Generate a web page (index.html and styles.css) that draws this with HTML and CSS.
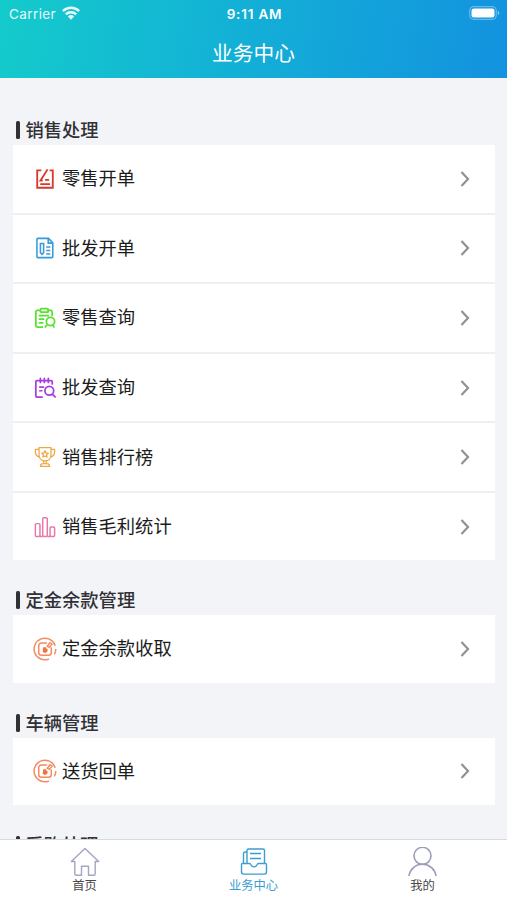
FILE: index.html
```html
<!DOCTYPE html>
<html lang="zh-CN">
<head>
    <meta charset="UTF-8">
    <meta name="viewport" content="width=device-width, initial-scale=1.0">
    <title>业务中心</title>
    <link rel="stylesheet" href="styles.css">
</head>
<body>
    <svg class="sprite">
        <symbol id="arrow" viewBox="0 0 10 18">
            <path d="M1.5 2 8 9l-6.5 7" fill="none" stroke="#929292" stroke-width="2.2"/>
        </symbol>
        <symbol id="deposit" viewBox="0 0 24 24">
            <g fill="none" stroke="#f48b60" stroke-width="1.5" stroke-linecap="round">
                <path d="M15.500 22.200A10.800 10.800 0 1 1 22 8.200"/>
                <path d="M22.800 12.500a10.500 10.500 0 0 1-1.300 4.300"/>
                <path d="M13.500 6H8.500A2.800 2.800 0 0 0 5.700 8.800V15.500A2.800 2.800 0 0 0 8.500 18.300h7a2.800 2.800 0 0 0 2.800-2.800v-4.500"/>
                <path d="M14.300 9.300l2.700-3.600 2 1.500-2.500 3.200z"/>
            </g>
            <path d="M10.200 10.300h3v1.500h1.300v2.800l-1.700 1.200h-1.900l-1.200-1.200z" fill="#f4703c"/>
        </symbol>
    </svg>

    <div class="app">
        <header class="header">
            <div class="status-bar">
                <div class="carrier">
                    <span>Carrier</span>
                    <svg width="18" height="14" viewBox="0 0 18 14">
                        <g fill="none" stroke="#fff" stroke-width="2.5">
                            <path d="M.9 5.200a11.500 11.500 0 0 1 16.200 0"/>
                            <path d="M3.800 8.300a7.400 7.400 0 0 1 10.400 0"/>
                        </g>
                        <path d="M9 13.800 5.900 10.500a4.500 4.500 0 0 1 6.200 0z" fill="#fff"/>
                    </svg>
                </div>
                <div class="time">9:11 AM</div>
                <div class="battery">
                    <svg width="31" height="14" viewBox="0 0 31 14">
                        <rect x=".7" y=".7" width="26.600" height="12.600" rx="4" fill="none" stroke="#fff" stroke-opacity=".35" stroke-width="1.200"/>
                        <rect x="2.500" y="2.500" width="23" height="9" rx="2.300" fill="#fff"/>
                        <path d="M28.800 4.800c2 1 2 3.400 0 4.400z" fill="#fff" fill-opacity=".5"/>
                    </svg>
                </div>
            </div>
            <h1>业务中心</h1>
        </header>

        <main class="content">
            <section>
                <h2><span>销售处理</span></h2>
                <div class="card">
                    <div class="row">
                        <svg class="icon" viewBox="0 0 24 24" fill="none" stroke="#d9392d" stroke-width="2">
                            <path d="M8 2.500H3.500v19h17v-19H17"/>
                            <path d="M14.800 1.500 7 13.800h2.500M12 13h4.500M6.800 17.500h10.700"/>
                        </svg>
                        <span>零售开单</span>
                        <svg class="arrow"><use href="#arrow"/></svg>
                    </div>
                    <div class="row">
                        <svg class="icon" viewBox="0 0 24 24" fill="none" stroke="#379bdc" stroke-width="1.700">
                            <path d="M4.200 1.500h11.600l4.700 4.900v15.100a1 1 0 0 1-1 1H4.200a1 1 0 0 1-1-1V2.500a1 1 0 0 1 1-1z"/>
                            <path d="M15.500 1.700v5h4.800M7 7h3.500v10l-1.700 1.900L7 17zM13.300 11h4.500M13.300 14.800h4.500M13.300 18.600h4.500"/>
                        </svg>
                        <span>批发开单</span>
                        <svg class="arrow"><use href="#arrow"/></svg>
                    </div>
                    <div class="row">
                        <svg class="icon" viewBox="0 0 24 24" fill="none" stroke="#55e32d" stroke-width="1.900" stroke-linecap="round">
                            <path d="M7 3.800H3.700A1.700 1.700 0 0 0 2 5.500v14.800A1.700 1.700 0 0 0 3.700 22h5.500M15.500 3.800h2.600a1.700 1.700 0 0 1 1.700 1.700v3.700"/>
                            <rect x="7" y="1.700" width="8.500" height="4" rx="1.200"/>
                            <path d="M6 9.500h9.500M6 13.300h4.500M6 17.300h3.500M13.800 20l-1.500 1.700M20.300 19.500l1.500 2.200"/>
                            <circle cx="18" cy="15.800" r="4.500"/>
                        </svg>
                        <span>零售查询</span>
                        <svg class="arrow"><use href="#arrow"/></svg>
                    </div>
                    <div class="row">
                        <svg class="icon" viewBox="0 0 24 24" fill="none" stroke="#a63ddd" stroke-width="1.900" stroke-linecap="round">
                            <path d="M8.800 22H3.200A1.200 1.200 0 0 1 2 20.800V5.200A1.200 1.200 0 0 1 3.200 4h15.500a1.200 1.200 0 0 1 1.200 1.200V7.500"/>
                            <path d="M7 1.500v4.500M11.300 1.500v4.500M15.600 1.500v4.500M6.300 11h4M6.300 15h2.200M20 18.700l3 3"/>
                            <circle cx="16.700" cy="15" r="4.800"/>
                        </svg>
                        <span>批发查询</span>
                        <svg class="arrow"><use href="#arrow"/></svg>
                    </div>
                    <div class="row">
                        <svg class="icon" viewBox="0 0 24 24" fill="none" stroke="#eda947" stroke-width="1.400" stroke-linejoin="round">
                            <path d="M5.500 1.700h13v7.800c0 4-2.700 6.800-6.500 6.800S5.500 13.500 5.500 9.500z"/>
                            <path d="M5.500 3.700H1.500v2.600c0 3.200 1.900 5.200 4.700 5.700M18.500 3.700h4v2.600c0 3.200-1.900 5.200-4.700 5.700M10.500 16.300v3M13.500 16.300v3M7 22.300c0-2 1.200-3 3-3h4c1.800 0 3 1 3 3z"/>
                            <path d="m12 5.300 1.100 2.200 2.400.4-1.700 1.700.4 2.400-2.200-1.100-2.200 1.100.4-2.400-1.700-1.700 2.400-.4z"/>
                        </svg>
                        <span>销售排行榜</span>
                        <svg class="arrow"><use href="#arrow"/></svg>
                    </div>
                    <div class="row">
                        <svg class="icon" viewBox="0 0 24 24" fill="none" stroke="#e678a7" stroke-width="1.600">
                            <rect x="1.500" y="8.300" width="5" height="14" rx="1.300"/>
                            <rect x="9.500" y="1.800" width="5" height="20.500" rx="1.300"/>
                            <rect x="17.500" y="12" width="5" height="10.300" rx="1.300"/>
                            <path d="M6.500 22.300h3M14.500 22.300h3"/>
                        </svg>
                        <span>销售毛利统计</span>
                        <svg class="arrow"><use href="#arrow"/></svg>
                    </div>
                </div>
            </section>

            <section>
                <h2><span>定金余款管理</span></h2>
                <div class="card">
                    <div class="row">
                        <svg class="icon icon-lg"><use href="#deposit"/></svg>
                        <span>定金余款收取</span>
                        <svg class="arrow"><use href="#arrow"/></svg>
                    </div>
                </div>
            </section>

            <section>
                <h2><span>车辆管理</span></h2>
                <div class="card">
                    <div class="row">
                        <svg class="icon icon-lg"><use href="#deposit"/></svg>
                        <span>送货回单</span>
                        <svg class="arrow"><use href="#arrow"/></svg>
                    </div>
                </div>
            </section>

            <section>
                <h2><span>采购处理</span></h2>
            </section>
        </main>

        <nav class="tab-bar">
            <a class="tab">
                <svg viewBox="0 0 30 30" fill="none" stroke="#a3a4c6" stroke-width="1.400" stroke-linejoin="round">
                    <path d="M15 1.500 1.300 14.500h3.500v12.200a1.500 1.500 0 0 0 1.500 1.500h5.200v-9h7v9h5.200a1.500 1.500 0 0 0 1.500-1.500V14.500h3.500z"/>
                </svg>
                <span>首页</span>
            </a>
            <a class="tab active">
                <svg viewBox="0 0 30 30" fill="none" stroke="#3b9dd2" stroke-width="1.400" stroke-linejoin="round">
                    <path d="M8 16V3.500A1.500 1.500 0 0 1 9.500 2H24a1.500 1.500 0 0 1 1.500 1.500V16M8 5H6.200A1.700 1.700 0 0 0 4.500 6.700V16M11 6.500h11M11 11.500h11"/>
                    <path d="M3.500 16.500h6.700c1 0 1.500.5 1.800 1.300.6 1.400 1.600 2.100 3 2.100s2.400-.7 3-2.100c.3-.8.8-1.300 1.800-1.300h6.700a1 1 0 0 1 1 1v7.600a2 2 0 0 1-2 2h-21a2 2 0 0 1-2-2v-7.600a1 1 0 0 1 1-1z"/>
                </svg>
                <span>业务中心</span>
            </a>
            <a class="tab">
                <svg viewBox="0 0 30 30" fill="none" stroke="#9b9cbc" stroke-width="1.600">
                    <circle cx="14.500" cy="8.800" r="8.500"/>
                    <path d="M.9 29C2 22 7.500 17.300 14.500 17.300S27 22 28.100 29"/>
                </svg>
                <span>我的</span>
            </a>
        </nav>
    </div>
</body>
</html>
```
FILE: styles.css
```css
* {
    margin: 0;
    padding: 0;
    box-sizing: border-box;
}

body {
    font-family: Inter, 'Noto Sans CJK SC', sans-serif;
    background: #f3f4f8;
    color: #1c1c1c;
}

.sprite {
    display: none;
}

.app {
    height: 100vh;
    display: flex;
    flex-direction: column;
    overflow: hidden;
}

/* Header */
.header {
    flex: none;
    height: 78px;
    background: linear-gradient(100deg, #14cbcb 0%, #13b1d6 45%, #1392df 100%);
    color: #fff;
}

.status-bar {
    display: grid;
    grid-template-columns: 1fr auto 1fr;
    align-items: center;
    height: 26px;
    padding: 0 7px 0 9px;
    font-size: 13.5px;
}

.carrier {
    display: flex;
    align-items: center;
    gap: 6px;
    letter-spacing: 0.4px;
    opacity: 0.9;
}

.carrier span {
    padding-top: 1px;
}

.time {
    padding-top: 1px;
    font-size: 13.5px;
    font-weight: 600;
    letter-spacing: 0.8px;
}

.battery {
    display: flex;
    justify-content: flex-end;
}

.header h1 {
    height: 52px;
    line-height: 55px;
    font-size: 20.7px;
    font-weight: 400;
    text-align: center;
}

/* Menu sections */
.content {
    flex: 1;
    min-height: 0;
    overflow: hidden;
    padding: 37px 12px 0 13px;
}

section {
    margin-bottom: 25px;
}

h2 {
    display: flex;
    align-items: center;
    gap: 5.5px;
    height: 30px;
    padding-left: 3px;
    font-size: 18.3px;
    font-weight: 500;
    color: #303135;
}

h2::before {
    content: '';
    width: 4px;
    height: 18px;
    border-radius: 1.5px;
    background: #303135;
}

h2 span {
    padding-bottom: 2px;
}

.row span {
    padding-bottom: 3px;
}

.card {
    background: #fff;
}

.row {
    display: flex;
    align-items: center;
    height: 69.6px;
    padding: 0 25px 0 21px;
    border-bottom: 2px solid #eeeff2;
    font-size: 18.3px;
}

.row:last-child {
    height: 67.3px;
    border-bottom: none;
}

.icon {
    width: 22px;
    height: 22px;
    margin-right: 6px;
}

.icon-lg {
    width: 24px;
    height: 24px;
    margin: 0 5px 0 -1px;
}

.arrow {
    width: 10px;
    height: 18px;
    margin-left: auto;
}

/* Bottom tabs */
.tab-bar {
    flex: none;
    display: flex;
    height: 61px;
    border-top: 1.5px solid #d8d9df;
    background: #fff;
}

.tab {
    flex: 1;
    display: flex;
    flex-direction: column;
    align-items: center;
    padding-top: 7px;
    font-size: 12.3px;
    line-height: 18px;
    color: #48484a;
}

.tab svg {
    width: 30px;
    height: 30px;
}

.tab.active {
    color: #3b9dd2;
}
```
